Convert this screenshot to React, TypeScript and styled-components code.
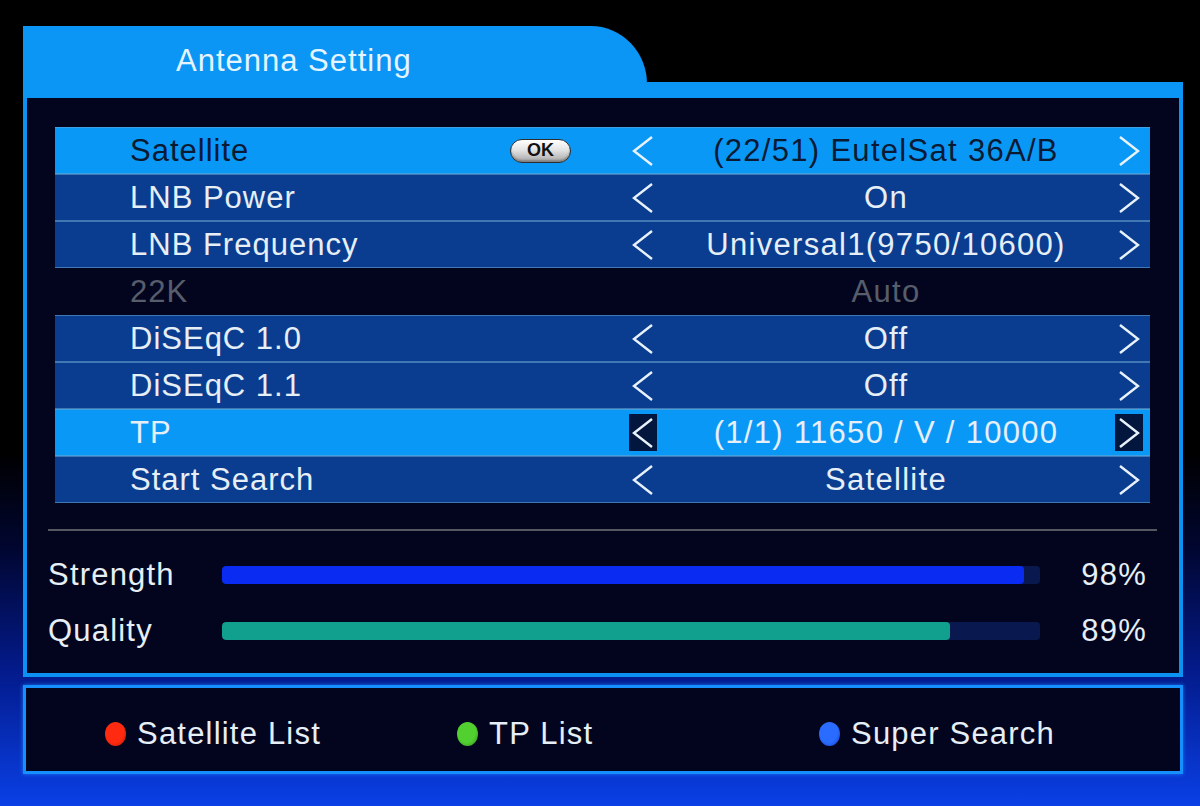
import React from "react";
import styled, { createGlobalStyle } from "styled-components";

const GlobalStyle = createGlobalStyle`
  html, body {
    margin: 0;
    padding: 0;
  }
  body {
    width: 1200px;
    height: 806px;
    overflow: hidden;
    font-family: "Liberation Sans", Arial, sans-serif;
    background: linear-gradient(
      to bottom,
      #000000 0%,
      #000000 56%,
      #010630 68%,
      #031a8a 83%,
      #0a40e6 100%
    );
  }
`;

type RowKind = "normal" | "focus" | "active" | "disabled";

type SettingRow = {
  label: string;
  value: string;
  kind: RowKind;
  ok?: boolean;
};

const rows: SettingRow[] = [
  { label: "Satellite", value: "(22/51) EutelSat 36A/B", kind: "focus", ok: true },
  { label: "LNB Power", value: "On", kind: "normal" },
  { label: "LNB Frequency", value: "Universal1(9750/10600)", kind: "normal" },
  { label: "22K", value: "Auto", kind: "disabled" },
  { label: "DiSEqC 1.0", value: "Off", kind: "normal" },
  { label: "DiSEqC 1.1", value: "Off", kind: "normal" },
  { label: "TP", value: "(1/1) 11650 / V / 10000", kind: "active" },
  { label: "Start Search", value: "Satellite", kind: "normal" },
];

const signals = [
  { label: "Strength", value: 98, color: "#0a2cf2" },
  { label: "Quality", value: 89, color: "#12a08e" },
];

const hints = [
  { label: "Satellite List", color: "#ff2a10", edge: "#b01800" },
  { label: "TP List", color: "#52d030", edge: "#2a8a18" },
  { label: "Super Search", color: "#2a6cff", edge: "#1038c0" },
];

const Screen = styled.div`
  padding: 26px 0 0 23px;
  width: 1160px;
`;

const Header = styled.div`
  display: flex;
  align-items: flex-end;
  height: 72px;
`;

const Tab = styled.div`
  width: 624px;
  height: 72px;
  background: #0b96f5;
  border-top-right-radius: 56px 58px;
  display: flex;
  align-items: center;
  padding-left: 153px;
  box-sizing: border-box;
`;

const Title = styled.span`
  font-size: 31px;
  letter-spacing: 1px;
  color: #e4f5ff;
  padding-bottom: 2px;
`;

const Strip = styled.div`
  flex: 1;
  height: 16px;
  background: #0b96f5;
`;

const Panel = styled.div`
  background: #03051f;
  border: 4px solid #0b92f2;
  border-top: none;
  padding: 29px 0 25px;
  height: 579px;
  box-sizing: border-box;
`;

const List = styled.div`
  display: flex;
  flex-direction: column;
  margin: 0 29px 0 28px;
`;

const Row = styled.div<{ $kind: RowKind }>`
  display: flex;
  align-items: center;
  height: 47px;
  box-sizing: border-box;
  padding: 0 7px 0 75px;
  font-size: 31px;
  letter-spacing: 1px;
  background: ${({ $kind }) =>
    $kind === "focus" || $kind === "active"
      ? "#0a98f7"
      : $kind === "normal"
      ? "#0a3d8f"
      : "transparent"};
  border-top: 1px solid
    ${({ $kind }) => ($kind === "disabled" ? "transparent" : "rgba(110, 170, 210, 0.55)")};
  border-bottom: 1px solid
    ${({ $kind }) => ($kind === "disabled" ? "transparent" : "rgba(110, 170, 210, 0.55)")};
  color: ${({ $kind }) =>
    $kind === "focus" ? "#0b1a33" : $kind === "disabled" ? "#575d6a" : "#e6eef6"};
`;

const LabelCell = styled.div`
  width: 499px;
  display: flex;
  align-items: center;
`;

const OkPill = styled.span`
  margin-left: auto;
  margin-right: 58px;
  width: 61px;
  height: 24px;
  border-radius: 12px;
  border: 1px solid #2e2e2e;
  background: linear-gradient(to bottom, #ffffff 0%, #e4e4e4 45%, #a6a6a6 100%);
  box-shadow: inset 0 -2px 2px rgba(0, 0, 0, 0.25);
  color: #111;
  font-size: 18px;
  font-weight: bold;
  letter-spacing: 0;
  display: flex;
  align-items: center;
  justify-content: center;
  box-sizing: border-box;
`;

const ArrowCell = styled.div<{ $boxed: boolean }>`
  width: 28px;
  height: 37px;
  display: flex;
  align-items: center;
  justify-content: center;
  background: ${({ $boxed }) => ($boxed ? "#03163e" : "transparent")};
`;

const ValueCell = styled.div`
  width: 458px;
  text-align: center;
  white-space: nowrap;
  letter-spacing: 1.3px;
`;

const Divider = styled.div`
  height: 2px;
  background: #55585e;
  margin: 26px 22px 24px 21px;
`;

const SignalList = styled.div`
  display: flex;
  flex-direction: column;
  gap: 16px;
  padding: 0 32px 0 21px;
`;

const SignalRow = styled.div`
  display: flex;
  align-items: center;
  height: 40px;
  font-size: 31px;
  letter-spacing: 1.2px;
  color: #e6eef6;
`;

const SignalLabel = styled.span`
  width: 174px;
`;

const Track = styled.div`
  width: 818px;
  height: 18px;
  border-radius: 4px;
  background: #0a1850;
  overflow: hidden;
`;

const Fill = styled.div<{ $color: string }>`
  height: 100%;
  border-radius: 4px;
  background: ${({ $color }) => $color};
`;

const Percent = styled.span`
  margin-left: auto;
`;

const Footer = styled.div`
  margin-top: 8px;
  height: 89px;
  box-sizing: border-box;
  border: 3px solid #1790ff;
  box-shadow: 0 0 4px rgba(30, 140, 255, 0.8);
  background: #03051f;
  display: grid;
  grid-template-columns: 352px 362px auto;
  align-items: center;
  padding: 8px 0 0 79px;
`;

const Hint = styled.div`
  display: flex;
  align-items: center;
  font-size: 31px;
  letter-spacing: 1.2px;
  color: #e6eef6;
`;

const Dot = styled.span<{ $color: string; $edge: string }>`
  width: 21px;
  height: 24px;
  border-radius: 50%;
  margin-right: 11px;
  background: radial-gradient(
    ellipse at 45% 35%,
    ${({ $color }) => $color} 0%,
    ${({ $color }) => $color} 55%,
    ${({ $edge }) => $edge} 100%
  );
`;

const Chevron = ({ dir, color }: { dir: "left" | "right"; color: string }) => (
  <svg width="24" height="32" viewBox="0 0 24 32">
    <polyline
      points={dir === "left" ? "21,2 3,16 21,30" : "3,2 21,16 3,30"}
      fill="none"
      stroke={color}
      strokeWidth="2.4"
      strokeLinejoin="miter"
    />
  </svg>
);

const App = () => {
  return (
    <>
      <GlobalStyle />
      <Screen>
        <Header>
          <Tab>
            <Title>Antenna Setting</Title>
          </Tab>
          <Strip />
        </Header>
        <Panel>
          <List>
            {rows.map((r) => (
              <Row key={r.label} $kind={r.kind}>
                <LabelCell>
                  {r.label}
                  {r.ok && <OkPill>OK</OkPill>}
                </LabelCell>
                <ArrowCell $boxed={r.kind === "active"}>
                  {r.kind !== "disabled" && <Chevron dir="left" color="#e8f2fa" />}
                </ArrowCell>
                <ValueCell>{r.value}</ValueCell>
                <ArrowCell $boxed={r.kind === "active"}>
                  {r.kind !== "disabled" && <Chevron dir="right" color="#e8f2fa" />}
                </ArrowCell>
              </Row>
            ))}
          </List>
          <Divider />
          <SignalList>
            {signals.map((s) => (
              <SignalRow key={s.label}>
                <SignalLabel>{s.label}</SignalLabel>
                <Track>
                  <Fill $color={s.color} style={{ width: `${s.value}%` }} />
                </Track>
                <Percent>{s.value}%</Percent>
              </SignalRow>
            ))}
          </SignalList>
        </Panel>
        <Footer>
          {hints.map((h) => (
            <Hint key={h.label}>
              <Dot $color={h.color} $edge={h.edge} />
              {h.label}
            </Hint>
          ))}
        </Footer>
      </Screen>
    </>
  );
};

export default App;
